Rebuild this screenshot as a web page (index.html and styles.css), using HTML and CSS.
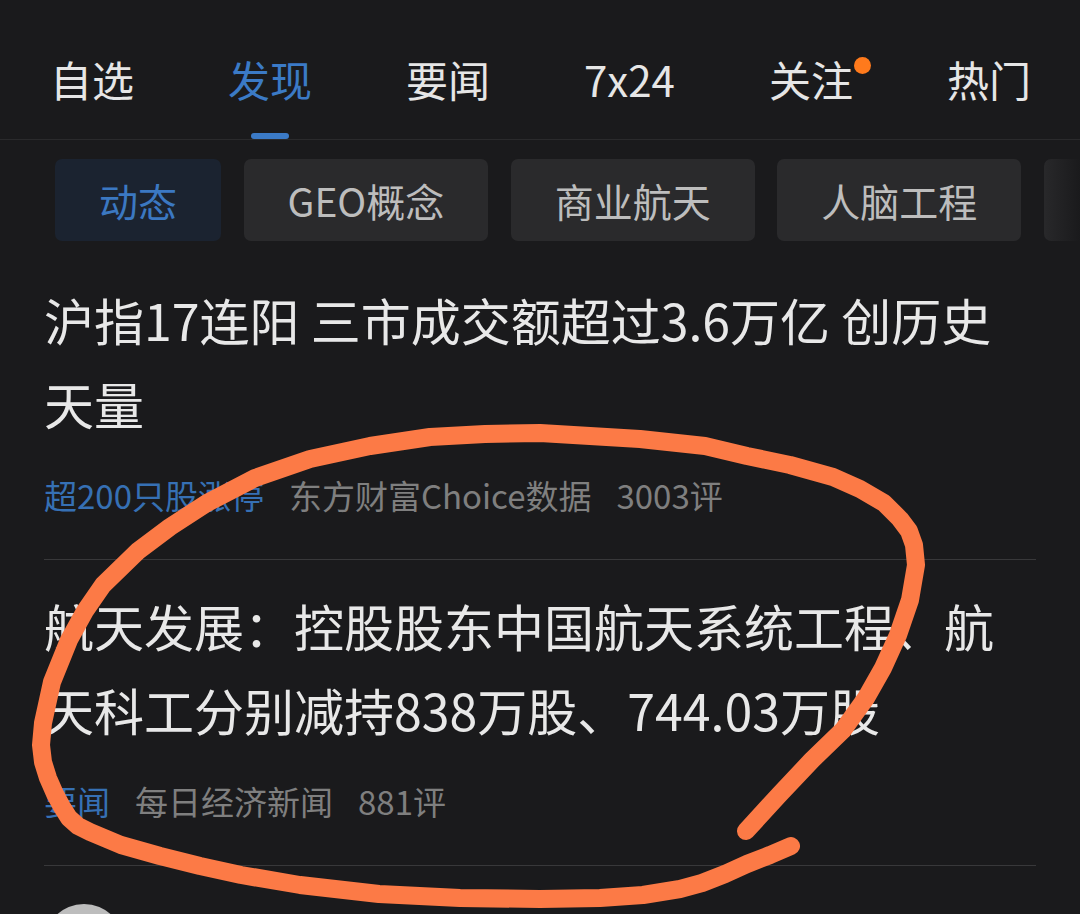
FILE: index.html
```html
<!DOCTYPE html>
<html lang="zh-CN">
<head>
  <meta charset="UTF-8" />
  <meta name="viewport" content="width=device-width, initial-scale=1.0" />
  <title>发现</title>
  <link rel="stylesheet" href="styles.css">
</head>
<body>
  <header class="tabs">
    <div class="tab"><span class="tab-label">自选</span></div>
    <div class="tab active"><span class="tab-label">发现</span><i class="tab-bar"></i></div>
    <div class="tab"><span class="tab-label">要闻</span></div>
    <div class="tab"><span class="tab-label">7x24</span></div>
    <div class="tab"><span class="tab-label">关注<i class="dot"></i></span></div>
    <div class="tab"><span class="tab-label">热门</span></div>
  </header>

  <nav class="chips">
    <span class="chip active">动态</span>
    <span class="chip">GEO概念</span>
    <span class="chip">商业航天</span>
    <span class="chip">人脑工程</span>
    <span class="chip more"></span>
  </nav>

  <main class="feed">
    <article class="news">
      <h2 class="news-title">沪指17连阳 三市成交额超过3.6万亿 创历史天量</h2>
      <div class="news-meta">
        <span class="tag">超200只股涨停</span>
        <span>东方财富Choice数据</span>
        <span>3003评</span>
      </div>
    </article>
    <article class="news">
      <h2 class="news-title">航天发展：控股股东中国航天系统工程、航天科工分别减持838万股、744.03万股</h2>
      <div class="news-meta">
        <span class="tag">要闻</span>
        <span>每日经济新闻</span>
        <span>881评</span>
      </div>
    </article>
    <article class="news next">
      <div class="avatar"></div>
    </article>
  </main>

  <!-- hand-drawn mark on top of the screenshot -->
  <svg class="scribble" width="1080" height="914" viewBox="0 0 1080 914">
    <polyline fill="none" stroke="#fc7a46" stroke-width="18" stroke-linecap="round" stroke-linejoin="round"
      points="746,831 779,795 812,760 843,730 866,698 883,668 898,635 910,600 916,565 914,545 909,531 900,519 884,503 860,489 833,477 790,465 747,456 705,446 640,439 590,436 540,433 485,434 430,437 370,446 310,459 255,478 207,503 170,527 138,551 103,585 85,611 69,640 52,682 43,723 41,745 43,762 48,778 55,794 62,807 69,818 78,826 90,832 121,845 160,856 200,866 241,875 300,885 379,894 460,898 540,899 600,898 643,895 680,889 702,883 725,874 747,864 770,855 791,846"/>
  </svg>
</body>
</html>
```

FILE: styles.css
```css
html, body {
  margin: 0;
  height: 914px;
  overflow: hidden;
  background: #1a1a1c;
}

body {
  position: relative;
  font-family: "Noto Sans CJK SC", "Noto Sans", sans-serif;
  color: #e6e6e6;
}

.tabs {
  display: flex;
  gap: 94px;
  padding-left: 50px;
  height: 139px;
  border-bottom: 1px solid #2a2a2c;
}

.tab {
  display: flex;
  flex-direction: column;
  align-items: center;
  padding-top: 54px;
}

.tab-label {
  position: relative;
  font-size: 42px;
  line-height: 50px;
  color: #e6e6e6;
}

.tab.active .tab-label {
  color: #3b7ac6;
}

.tab-bar {
  margin-top: auto;
  width: 38px;
  height: 6px;
  border-radius: 3px;
  background: #3b7ac6;
}

.dot {
  position: absolute;
  left: 100%;
  top: 3px;
  margin-left: 1px;
  width: 17px;
  height: 17px;
  border-radius: 50%;
  background: #ff7a1c;
}

.chips {
  position: relative;
  display: flex;
  gap: 22.5px;
  margin-top: 19px;
  padding-left: 55px;
  overflow: hidden;
  white-space: nowrap;
}

.chips::after {
  content: "";
  position: absolute;
  top: 0;
  right: 0;
  bottom: 0;
  width: 40px;
  background: linear-gradient(to right, rgba(26, 26, 28, 0), #1a1a1c);
}

.chip {
  flex-shrink: 0;
  height: 82px;
  line-height: 82px;
  padding: 0 44px;
  font-size: 39px;
  background: #2a2a2c;
  color: #bdbdbd;
  border-radius: 7px;
}

.chip.more {
  width: 120px;
}

.chip.active {
  background: #1b2330;
  color: #3b78c2;
}

.feed {
  margin-top: 13px;
  padding: 0 44px;
}

.news {
  padding: 23px 0 44px;
  border-bottom: 1px solid #38383a;
}

.news-title {
  margin: 0;
  font-size: 50px;
  line-height: 84px;
  font-weight: 400;
  color: #e8e8e8;
}

.news-meta {
  display: flex;
  gap: 25px;
  margin-top: 30px;
  font-size: 33px;
  line-height: 40px;
  color: #7f7f7f;
}

.tag {
  color: #3670b4;
}

.news.next {
  padding-top: 38px;
  border-bottom: none;
}

.avatar {
  width: 80px;
  height: 80px;
  border-radius: 50%;
  background: #bdbdbd;
}

.scribble {
  position: absolute;
  left: 0;
  top: 0;
  pointer-events: none;
}
```
